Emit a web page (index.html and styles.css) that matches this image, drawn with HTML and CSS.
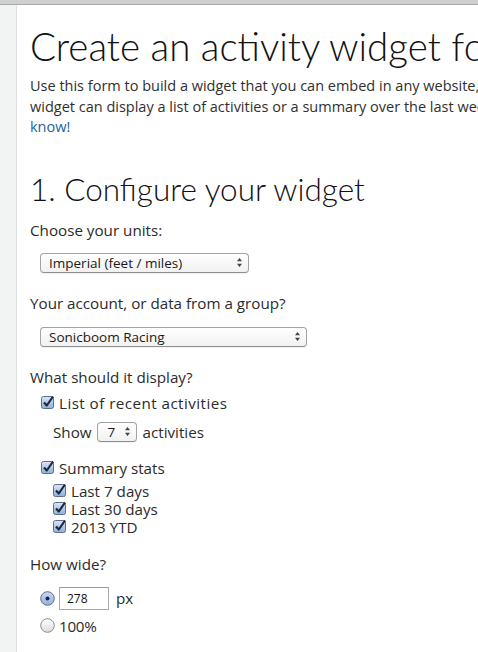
FILE: index.html
```html
<!DOCTYPE html>
<html>
<head>
<meta charset="utf-8">
<title>Create an activity widget</title>
<link rel="stylesheet" href="styles.css">
</head>
<body>
<div class="topbar"></div>
<div class="page">
  <div class="rail"></div>
  <main class="content">
    <h1 class="title">Create an activity widget for your site</h1>
    <p class="intro">Use this form to build a widget that you can embed in any website, blog or forum. The<br>widget can display a list of activities or a summary over the last week. Let us<br><a href="#">know!</a></p>

    <h2 class="section">1. Configure your widget</h2>

    <div class="field">
      <div class="label">Choose your units:</div>
      <div class="popup popup-units">
        <span class="popup-text">Imperial (feet / miles)</span>
        <svg class="arrows" width="5" height="9" viewBox="0 0 5 9"><path d="M2.5 0 L5 3.2 L0 3.2 Z M0 5.8 L5 5.8 L2.5 9 Z" fill="#444"/></svg>
      </div>
    </div>

    <div class="field">
      <div class="label">Your account, or data from a group?</div>
      <div class="popup popup-account">
        <span class="popup-text">Sonicboom Racing</span>
        <svg class="arrows" width="5" height="9" viewBox="0 0 5 9"><path d="M2.5 0 L5 3.2 L0 3.2 Z M0 5.8 L5 5.8 L2.5 9 Z" fill="#444"/></svg>
      </div>
    </div>

    <div class="field">
      <div class="label">What should it display?</div>
      <div class="check-row top-check">
        <svg class="check" width="14" height="14" viewBox="0 0 14 14"><defs><linearGradient id="cg1" x1="0" y1="0" x2="0" y2="1"><stop offset="0" stop-color="#dbe6f4"/><stop offset="1" stop-color="#8eaedb"/></linearGradient></defs><rect x="0.5" y="1.5" width="12" height="12" rx="2" fill="url(#cg1)" stroke="#5d6e8a"/><path d="M3 7.5 L5.8 10.5 L12 1.5" fill="none" stroke="#1b2740" stroke-width="2.2" stroke-linejoin="round"/></svg>
        <span class="wide-label">List of recent activities</span>
      </div>
      <div class="show-row">
        <span>Show</span>
        <div class="popup popup-count">
          <span class="popup-text">7</span>
          <svg class="arrows" width="5" height="9" viewBox="0 0 5 9"><path d="M2.5 0 L5 3.2 L0 3.2 Z M0 5.8 L5 5.8 L2.5 9 Z" fill="#444"/></svg>
        </div>
        <span>activities</span>
      </div>
      <div class="check-row top-check summary">
        <svg class="check" width="14" height="14" viewBox="0 0 14 14"><rect x="0.5" y="1.5" width="12" height="12" rx="2" fill="url(#cg1)" stroke="#5d6e8a"/><path d="M3 7.5 L5.8 10.5 L12 1.5" fill="none" stroke="#1b2740" stroke-width="2.2" stroke-linejoin="round"/></svg>
        <span>Summary stats</span>
      </div>
      <div class="sub-list">
        <div class="check-row sub-check">
          <svg class="check" width="14" height="14" viewBox="0 0 14 14"><rect x="0.5" y="1.5" width="12" height="12" rx="2" fill="url(#cg1)" stroke="#5d6e8a"/><path d="M3 7.5 L5.8 10.5 L12 1.5" fill="none" stroke="#1b2740" stroke-width="2.2" stroke-linejoin="round"/></svg>
          <span>Last 7 days</span>
        </div>
        <div class="check-row sub-check">
          <svg class="check" width="14" height="14" viewBox="0 0 14 14"><rect x="0.5" y="1.5" width="12" height="12" rx="2" fill="url(#cg1)" stroke="#5d6e8a"/><path d="M3 7.5 L5.8 10.5 L12 1.5" fill="none" stroke="#1b2740" stroke-width="2.2" stroke-linejoin="round"/></svg>
          <span>Last 30 days</span>
        </div>
        <div class="check-row sub-check">
          <svg class="check" width="14" height="14" viewBox="0 0 14 14"><rect x="0.5" y="1.5" width="12" height="12" rx="2" fill="url(#cg1)" stroke="#5d6e8a"/><path d="M3 7.5 L5.8 10.5 L12 1.5" fill="none" stroke="#1b2740" stroke-width="2.2" stroke-linejoin="round"/></svg>
          <span>2013 YTD</span>
        </div>
      </div>
    </div>

    <div class="field wide-field">
      <div class="label">How wide?</div>
      <div class="radio-row first-radio">
        <svg class="radio" width="15" height="15" viewBox="0 0 15 15"><defs><linearGradient id="rg1" x1="0" y1="0" x2="0" y2="1"><stop offset="0" stop-color="#c9daf1"/><stop offset="1" stop-color="#8fb2e2"/></linearGradient></defs><circle cx="7.5" cy="7.5" r="6.8" fill="url(#rg1)" stroke="#61708a"/><circle cx="7.5" cy="7.5" r="2" fill="#1d2638"/></svg>
        <span class="width-input">278</span>
        <span>px</span>
      </div>
      <div class="radio-row">
        <svg class="radio" width="15" height="15" viewBox="0 0 15 15"><defs><linearGradient id="rg2" x1="0" y1="0" x2="0" y2="1"><stop offset="0" stop-color="#ffffff"/><stop offset="1" stop-color="#dcdcdc"/></linearGradient></defs><circle cx="7.5" cy="7.5" r="6.8" fill="url(#rg2)" stroke="#8c8c8c"/></svg>
        <span class="pct">100%</span>
      </div>
    </div>
  </main>
</div>
</body>
</html>
```

FILE: styles.css
```css
html, body {
  margin: 0;
  padding: 0;
  background: #ffffff;
  overflow: hidden;
}

body {
  font-family: "Open Sans", "DejaVu Sans", sans-serif;
  color: #2b2b2b;
  width: 478px;
  height: 652px;
}

.topbar {
  height: 4px;
  background: #cfcfcf;
  border-bottom: 1px solid #a9a9a9;
}

.page {
  display: flex;
  min-height: 647px;
}

.rail {
  width: 16px;
  flex-shrink: 0;
  background: #f2f3f3;
  border-right: 1px solid #dfe1e1;
}

.content {
  flex-shrink: 0;
  width: 760px;
  padding-left: 13px;
  padding-top: 17px;
}

.title {
  margin: 0;
  font-family: Lato, "Open Sans", sans-serif;
  font-weight: 300;
  font-size: 38.5px;
  line-height: 48px;
  color: #111;
  white-space: nowrap;
}

.intro {
  margin: 6px 0 0;
  font-size: 14.5px;
  line-height: 20.5px;
  white-space: nowrap;
  color: #2f2f2f;
}

.intro a {
  color: #23639a;
  text-decoration: none;
}

.section {
  margin: 31px 0 0;
  font-family: Lato, "Open Sans", sans-serif;
  font-weight: 300;
  font-size: 31.5px;
  line-height: 40px;
  color: #111;
  white-space: nowrap;
}

.field {
  font-size: 15.2px;
  line-height: 20px;
}

.field + .field {
  margin-top: 20px;
}

.section + .field {
  margin-top: 11px;
}

.field.wide-field {
  margin-top: 18px;
}

.label {
  color: #2b2b2b;
}

.popup {
  display: flex;
  align-items: center;
  justify-content: space-between;
  box-sizing: border-box;
  height: 20px;
  padding: 0 6px 0 8px;
  border: 1px solid #a3a3a3;
  border-bottom-color: #8e8e8e;
  border-radius: 4px;
  background: linear-gradient(#ffffff, #f1f1f1);
  box-shadow: 0 1px 0 rgba(0, 0, 0, 0.05);
  font-size: 13.5px;
  line-height: 18px;
  color: #1a1a1a;
}

.popup-units {
  width: 209px;
  margin: 13px 0 0 10px;
}

.popup-account {
  width: 267px;
  margin: 14px 0 0 10px;
}

.popup-count {
  width: 40px;
  padding: 0 6px 0 10px;
  margin: 0 6px 0 5px;
}

.check-row,
.radio-row,
.show-row {
  display: flex;
  align-items: center;
}

.check {
  flex-shrink: 0;
  margin-right: 4px;
  margin-top: -2px;
}

.wide-label {
  letter-spacing: 0.45px;
}

.top-check {
  margin: 6px 0 0 11px;
}

.show-row {
  margin: 9px 0 0 23px;
  height: 20px;
}

.top-check.summary {
  margin-top: 16px;
}

.sub-list {
  margin: 4px 0 0 23px;
}

.sub-check {
  height: 18px;
  line-height: 18px;
}

.radio {
  flex-shrink: 0;
  margin-right: 4px;
}

.first-radio {
  margin: 13px 0 0 10px;
}

.radio-row + .radio-row {
  margin: 6px 0 0 10px;
}

.pct {
  letter-spacing: -0.3px;
}

.width-input {
  box-sizing: border-box;
  width: 50px;
  height: 23px;
  padding-left: 7px;
  border: 1px solid #ababab;
  border-top-color: #9a9a9a;
  background: #fff;
  font-size: 12px;
  line-height: 21px;
  color: #111;
  margin-right: 7px;
}
```
